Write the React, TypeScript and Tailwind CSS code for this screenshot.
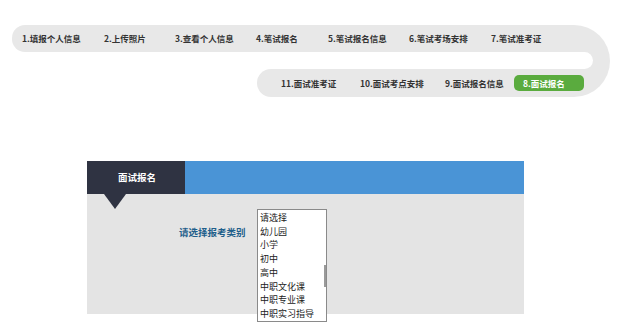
import React from 'react';

const topSteps = [
  { label: '1.填报个人信息', w: 82 },
  { label: '2.上传照片', w: 71 },
  { label: '3.查看个人信息', w: 81 },
  { label: '4.笔试报名', w: 72 },
  { label: '5.笔试报名信息', w: 81 },
  { label: '6.笔试考场安排', w: 82 },
  { label: '7.笔试准考证', w: 70 },
];

const bottomSteps = [
  { label: '11.面试准考证', w: 79 },
  { label: '10.面试考点安排', w: 85 },
  { label: '9.面试报名信息', w: 69 },
];

const options = ['请选择', '幼儿园', '小学', '初中', '高中', '中职文化课', '中职专业课', '中职实习指导'];

export default function App() {
  return (
    <div
      className="w-[628px] h-[324px] overflow-hidden bg-white"
      style={{ fontFamily: '"Noto Sans CJK SC", "Liberation Sans", sans-serif' }}
    >
      {/* step track */}
      <div className="flex pt-[25px] pl-[12px]">
        <div className="w-[562px] flex flex-col">
          <div className="h-[27px] bg-[#e8e8e8] rounded-l-[13px] flex items-center pl-[10px] text-[8.5px] font-bold text-[#333]">
            {topSteps.map((s) => (
              <span key={s.label} style={{ width: s.w }} className="shrink-0">
                {s.label}
              </span>
            ))}
          </div>
          <div className="relative z-10 h-[17px] w-[581px] bg-white rounded-r-full" />
          <div className="h-[28px] flex">
            <div className="w-[245px] bg-white" />
            <div className="flex-1 bg-[#e8e8e8] rounded-l-[14px] flex items-center pl-[24px] text-[8.5px] font-bold text-[#333]">
              {bottomSteps.map((s) => (
                <span key={s.label} style={{ width: s.w }} className="shrink-0">
                  {s.label}
                </span>
              ))}
              <span className="shrink-0 relative z-20 w-[70px] h-[16px] rounded-[5px] bg-[#5aab3e] text-white flex items-center pl-[9px] mr-[-30px]">
                8.面试报名
              </span>
            </div>
          </div>
        </div>
        <div className="w-[36px] h-[72px] bg-[#e8e8e8] rounded-r-[36px]" />
      </div>

      {/* panel */}
      <div className="mt-[64px] ml-[87px] w-[437px]">
        <div className="h-[33px] flex bg-[#4a94d6]">
          <div className="w-[98px] bg-[#2f3342] flex items-center pl-[31px] text-[9.5px] font-bold text-white">
            面试报名
          </div>
        </div>
        <div className="relative h-[120px] bg-[#e4e4e4]">
          <div className="absolute left-[17px] top-0 w-0 h-0 border-l-[11px] border-r-[11px] border-t-[15px] border-l-transparent border-r-transparent border-t-[#2f3342]" />
          <div className="flex pt-[15px] pl-[92px]">
            <div className="w-[78px] pt-[17px] text-[9.5px] font-bold text-[#1f5f8b] leading-[12px]">
              请选择报考类别
            </div>
            <div className="relative w-[70px] h-[113px] bg-white border border-[#8a8a8a] pl-[2px] pt-[1px]">
              {options.map((o) => (
                <div key={o} className="text-[9px] leading-[13.7px] text-[#222] whitespace-nowrap">
                  {o}
                </div>
              ))}
              <div className="absolute right-[0px] top-[55px] w-[2px] h-[22px] bg-[#9a9a9a]" />
            </div>
          </div>
        </div>
      </div>
    </div>
  );
}
